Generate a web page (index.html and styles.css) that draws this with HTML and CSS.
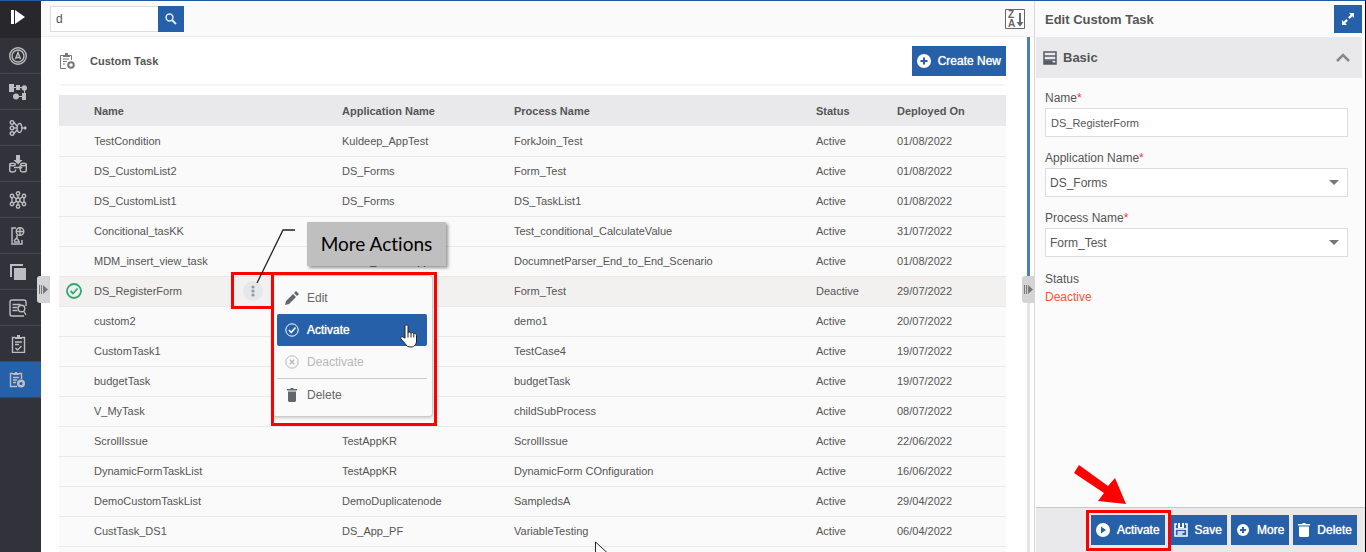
FILE: index.html
```html
<!DOCTYPE html>
<html lang="en">
<head>
    <meta charset="UTF-8">
    <meta name="viewport" content="width=device-width, initial-scale=1.0">
    <title>Custom Task</title>
    <link rel="stylesheet" href="styles.css">
</head>
<body>
    <div class="app">
        <nav class="sidebar" aria-label="Modules">
            <a href="#" class="nav-item logo" aria-label="Home">
                <svg width="16" height="16" viewBox="0 0 16 16" fill="#fff"><path d="M1 1h3v14H1zM5 1l10 7-10 7z"/></svg>
            </a>
            <a href="#" class="nav-item" aria-label="Applications">
                <svg width="18" height="18" viewBox="0 0 18 18" class="line"><circle cx="9" cy="9" r="8.300"/><circle cx="9" cy="9" r="6"/><path d="M6.500 12 9 5.500l2.500 6.500M7.500 10.500h3"/></svg>
            </a>
            <a href="#" class="nav-item" aria-label="Processes">
                <svg width="18" height="18" viewBox="0 0 18 18" class="solid"><path d="M0 1h5v8H0zM7 2h4v5H7z"/><circle cx="15.300" cy="5" r="2.700"/><circle cx="7" cy="13.500" r="3"/><path d="M13 10h4v7h-4zM5 4h9v1H5zM15 7h1v4h-1zM9 13h5v1H9z"/></svg>
            </a>
            <a href="#" class="nav-item" aria-label="Integrations">
                <svg width="18" height="18" viewBox="0 0 18 18" class="line"><circle cx="3" cy="3.500" r="1.800"/><circle cx="3" cy="9" r="1.800"/><circle cx="3" cy="14.500" r="1.800"/><path d="M5 3.500 8 7M5 9h3M5 14.500 8 11M13 9h4M15.500 7.500 17 9l-1.500 1.500"/><ellipse cx="10.500" cy="9" rx="2.300" ry="4.500"/></svg>
            </a>
            <a href="#" class="nav-item" aria-label="Deploy">
                <svg width="18" height="18" viewBox="0 0 18 18" class="line"><path class="solid" d="M7 0h4v5h2.500L9 9.500 4.500 5H7z"/><ellipse cx="3.500" cy="9.500" rx="2.800" ry="1.200"/><path d="M.7 9.500v6c0 2 5.800 2 5.800 0v-1M17.300 9.500v6c0 2-5.800 2-5.800 0v-1"/><ellipse cx="14.500" cy="9.500" rx="2.800" ry="1.200"/><path d="M5 12.500h7M10.500 10.500l2 2-2 2"/></svg>
            </a>
            <a href="#" class="nav-item" aria-label="Network">
                <svg width="18" height="18" viewBox="0 0 18 18" class="line"><circle cx="9" cy="9" r="2"/><circle cx="9" cy="2.500" r="1.700"/><circle cx="9" cy="15.500" r="1.700"/><circle cx="3" cy="5" r="1.700"/><circle cx="15" cy="5" r="1.700"/><circle cx="3" cy="13" r="1.700"/><circle cx="15" cy="13" r="1.700"/><path d="M9 4v3M9 11v3M5 6l2.500 2M13 6l-2.500 2M5 12l2.500-2M13 12l-2.500-2M3 7v4M15 7v4"/></svg>
            </a>
            <a href="#" class="nav-item" aria-label="Mobile">
                <svg width="18" height="20" viewBox="0 0 18 20" class="line"><path d="M7 2H3v16h10v-4"/><circle cx="11" cy="5.500" r="3.800"/><path d="M7 5.500h8M11 2v7M8 9v3M5 15l2.500-3 2.500 3M5 16h6"/></svg>
            </a>
            <a href="#" class="nav-item" aria-label="Copies">
                <svg width="18" height="18" viewBox="0 0 18 18" class="solid"><path d="M1 1h13v2H3v11H1zM5 5h12v12H5z"/></svg>
            </a>
            <a href="#" class="nav-item" aria-label="Logs">
                <svg width="18" height="18" viewBox="0 0 18 18" class="line"><path d="M17 7V3a2 2 0 0 0-2-2H3a2 2 0 0 0-2 2v12a2 2 0 0 0 2 2h12"/><path d="M3.500 5.500h8M3.500 8.500h5M3.500 11.500h5"/><circle cx="12.500" cy="9.500" r="3.300"/><path d="m14.500 12 2.500 4"/></svg>
            </a>
            <a href="#" class="nav-item" aria-label="Tasks">
                <svg width="18" height="18" viewBox="0 0 18 18" class="line"><path d="M6 2.500H3.500v15h12v-15H13"/><path class="solid" d="M6 2h2V0h3v2h2v2H6z"/><path d="M6 7h7M6 9.500h4M6.500 13l2 2 4-4"/></svg>
            </a>
            <a href="#" class="nav-item active" aria-label="Custom Task">
                <svg width="18" height="18" viewBox="0 0 18 18" class="line"><path d="M4 2.500H1.500v13H8M10 2.500h2.500V8"/><path class="solid" d="M4 2h2V1h2v1h2v2H4z"/><path d="M4 6.500h6M4 9h4M4 11.500h3"/><circle cx="12" cy="12.500" r="2.800" stroke-width="2.500"/></svg>
            </a>
        </nav>
        <button type="button" class="handle handle-left" aria-label="Toggle menu">
            <svg width="9" height="9" viewBox="0 0 9 9" fill="#777"><path d="M0 0h1v9H0zM2 0h1v9H2zM4 0l5 4.500L4 9z"/></svg>
        </button>

        <main class="main">
            <div class="toolbar">
                <form class="search">
                    <input type="text" value="d" aria-label="Search">
                    <button type="button" aria-label="Search">
                        <svg width="12" height="12" viewBox="0 0 12 12" fill="none" stroke="#dfe9f5"><circle cx="4.500" cy="4.500" r="3.400" stroke-width="1.500"/><path d="m7 7 4 4" stroke-width="2"/></svg>
                    </button>
                </form>
                <button type="button" class="sort" aria-label="Sort descending">
                    <svg width="20" height="20" viewBox="0 0 20 20" fill="#666"><path d="M.5.500h19v19H.5z" fill="none" stroke="#666"/><text x="3" y="9">Z</text><text x="3" y="18">A</text><path d="M14 4h2v9h2.500L15 17.500 11.500 13H14z"/></svg>
                </button>
            </div>
            <div class="content">
                <div class="title-bar">
                    <svg class="title-icon" width="17" height="18" viewBox="0 0 17 18" fill="none" stroke="#777"><path d="M4 3.500H1.500v13H7M10 3.500h2.500V8"/><path d="M4 3h2V1h3v2h2v2H4z" fill="#777" stroke="none"/><path d="M4 7h6M4 9.500h4M4 12h2"/><circle cx="12" cy="13" r="2.800" stroke-width="2"/></svg>
                    <h1>Custom Task</h1>
                    <button type="button" class="btn create">
                        <svg width="14" height="14" viewBox="0 0 14 14"><circle cx="7" cy="7" r="7" fill="#fff"/><path d="M7 3.500v7M3.500 7h7" stroke="#2560a8" stroke-width="2"/></svg>
                        Create New
                    </button>
                </div>
                <table class="tasks">
                    <thead>
                        <tr>
                            <th class="col-check"></th>
                            <th class="col-name">Name</th>
                            <th class="col-more"></th>
                            <th class="col-app">Application Name</th>
                            <th>Process Name</th>
                            <th class="col-status">Status</th>
                            <th class="col-date">Deployed On</th>
                        </tr>
                    </thead>
                    <tbody>
                        <tr><td></td><td>TestCondition</td><td></td><td>Kuldeep_AppTest</td><td>ForkJoin_Test</td><td>Active</td><td>01/08/2022</td></tr>
                        <tr><td></td><td>DS_CustomList2</td><td></td><td>DS_Forms</td><td>Form_Test</td><td>Active</td><td>01/08/2022</td></tr>
                        <tr><td></td><td>DS_CustomList1</td><td></td><td>DS_Forms</td><td>DS_TaskList1</td><td>Active</td><td>01/08/2022</td></tr>
                        <tr><td></td><td>Concitional_tasKK</td><td></td><td></td><td>Test_conditional_CalculateValue</td><td>Active</td><td>31/07/2022</td></tr>
                        <tr><td></td><td>MDM_insert_view_task</td><td></td><td>Kunal_MasterApp</td><td>DocumnetParser_End_to_End_Scenario</td><td>Active</td><td>01/08/2022</td></tr>
                        <tr class="selected">
                            <td class="check">
                                <svg width="16" height="16" viewBox="0 0 16 16" fill="none" stroke="#2fa970" stroke-width="1.800"><circle cx="8" cy="8" r="7"/><path d="m4.500 8 2.500 2.500 4.500-5"/></svg>
                            </td>
                            <td>DS_RegisterForm</td>
                            <td>
                                <button type="button" class="more" aria-label="More Actions">
                                    <svg width="4" height="12" viewBox="0 0 4 12" fill="#999"><circle cx="2" cy="2" r="1.600"/><circle cx="2" cy="6" r="1.600"/><circle cx="2" cy="10" r="1.600"/></svg>
                                </button>
                            </td>
                            <td></td><td>Form_Test</td><td>Deactive</td><td>29/07/2022</td>
                        </tr>
                        <tr><td></td><td>custom2</td><td></td><td></td><td>demo1</td><td>Active</td><td>20/07/2022</td></tr>
                        <tr><td></td><td>CustomTask1</td><td></td><td></td><td>TestCase4</td><td>Active</td><td>19/07/2022</td></tr>
                        <tr><td></td><td>budgetTask</td><td></td><td></td><td>budgetTask</td><td>Active</td><td>19/07/2022</td></tr>
                        <tr><td></td><td>V_MyTask</td><td></td><td></td><td>childSubProcess</td><td>Active</td><td>08/07/2022</td></tr>
                        <tr><td></td><td>ScrollIssue</td><td></td><td>TestAppKR</td><td>ScrollIssue</td><td>Active</td><td>22/06/2022</td></tr>
                        <tr><td></td><td>DynamicFormTaskList</td><td></td><td>TestAppKR</td><td>DynamicForm COnfiguration</td><td>Active</td><td>16/06/2022</td></tr>
                        <tr><td></td><td>DemoCustomTaskList</td><td></td><td>DemoDuplicatenode</td><td>SampledsA</td><td>Active</td><td>29/04/2022</td></tr>
                        <tr><td></td><td>CustTask_DS1</td><td></td><td>DS_App_PF</td><td>VariableTesting</td><td>Active</td><td>06/04/2022</td></tr>
                        <tr><td></td><td></td><td></td><td></td><td></td><td></td><td></td></tr>
                    </tbody>
                </table>
            </div>
            <div class="scrollbar"></div>
        </main>

        <aside class="panel">
            <button type="button" class="handle handle-panel" aria-label="Toggle panel">
                <svg width="9" height="9" viewBox="0 0 9 9" fill="#777"><path d="M0 0h1v9H0zM2 0h1v9H2zM4 0l5 4.500L4 9z"/></svg>
            </button>
            <header class="panel-header">
                <h2>Edit Custom Task</h2>
                <button type="button" class="expand" aria-label="Expand">
                    <svg width="14" height="14" viewBox="0 0 14 14" fill="#fff"><path d="M8 1h5v5l-1.700-1.700-2.600 2.600-1.600-1.600 2.600-2.600zM1 8v5h5l-1.700-1.700 2.600-2.600-1.600-1.600-2.600 2.600z"/></svg>
                </button>
            </header>
            <div class="section-header">
                <svg width="14" height="14" viewBox="0 0 14 14" fill="none" stroke="#555b66" stroke-width="1.500"><path d="M1 1h12v12H1zM1 5h12M1 9h12"/><path d="M1 9.500h8l1 2h3V13H1z" fill="#555b66" stroke="none"/></svg>
                <h3>Basic</h3>
                <svg class="chevron" width="14" height="9" viewBox="0 0 14 9" fill="none" stroke="#888" stroke-width="2.500"><path d="m1 8 6-6 6 6"/></svg>
            </div>
            <form class="form">
                <div class="field">
                    <label for="name">Name<span class="required">*</span></label>
                    <input type="text" id="name" value="DS_RegisterForm">
                </div>
                <div class="field">
                    <label for="application">Application Name<span class="required">*</span></label>
                    <div class="select-box"><select id="application"><option>DS_Forms</option></select></div>
                </div>
                <div class="field">
                    <label for="process">Process Name<span class="required">*</span></label>
                    <div class="select-box"><select id="process"><option>Form_Test</option></select></div>
                </div>
                <div class="status">
                    <div>Status</div>
                    <div class="status-value">Deactive</div>
                </div>
            </form>
            <footer class="panel-footer">
                <button type="button" class="btn">
                    <svg width="14" height="14" viewBox="0 0 14 14"><circle cx="7" cy="7" r="7" fill="#fff"/><path d="m5 3.500 5 3.500-5 3.500z" fill="#2560a8"/></svg>
                    Activate
                </button>
                <button type="button" class="btn">
                    <svg width="14" height="14" viewBox="0 0 14 14" fill="none" stroke="#fff" stroke-width="1.500"><path d="M3 1H1v12h12V1h-2M1 6h12M3.500 9h7M3.500 11h5"/><path d="M4 0h2v4h2V0h2v5H4z" fill="#fff" stroke="none"/></svg>
                    Save
                </button>
                <button type="button" class="btn">
                    <svg width="14" height="14" viewBox="0 0 14 14"><circle cx="7" cy="7" r="6" fill="#fff"/><path d="M7 4v6M4 7h6" stroke="#2560a8" stroke-width="2"/></svg>
                    More
                </button>
                <button type="button" class="btn">
                    <svg width="12" height="14" viewBox="0 0 12 14" fill="#fff"><path d="M0 1h4l1-1h2l1 1h4v1.500H0zM1 3.500h10V13l-1 1H2l-1-1z"/></svg>
                    Delete
                </button>
            </footer>
            <div class="mark mark-activate"></div>
            <svg class="arrow" width="54" height="42" viewBox="0 0 54 42" fill="#f00"><path d="M7 1 36 22l7-8 11 26-28-3 6-8L2 9z"/></svg>
        </aside>

        <div class="menu">
            <button type="button" class="menu-item">
                <svg width="14" height="14" viewBox="0 0 14 14" fill="#62676e"><path d="m0 14 1-4 7-7 3 3-7 7zM9 2l2-2 3 3-2 2z"/></svg>
                Edit
            </button>
            <button type="button" class="menu-item current">
                <svg width="14" height="14" viewBox="0 0 14 14" fill="none" stroke="#fff"><circle cx="7" cy="7" r="6.200"/><path d="m4 7 2.200 2.500L10.500 4.500" stroke-width="1.500"/></svg>
                Activate
            </button>
            <button type="button" class="menu-item" disabled>
                <svg width="14" height="14" viewBox="0 0 14 14" fill="none" stroke="#b8b8b8"><circle cx="7" cy="7" r="6.200"/><path d="m4.800 4.800 4.400 4.400M9.200 4.800 4.800 9.200" stroke-width="1.300"/></svg>
                Deactivate
            </button>
            <button type="button" class="menu-item last">
                <svg width="14" height="14" viewBox="0 0 14 14" fill="#62676e"><path d="M2 1h3l1-1h2l1 1h3v1.500H2zM3 3.500h8V13l-1 1H4l-1-1z"/></svg>
                Delete
            </button>
        </div>
        <div class="mark mark-more"></div>
        <div class="mark mark-menu"></div>
        <svg class="leader" width="40" height="56" viewBox="0 0 40 56" fill="none" stroke="#222" stroke-width="1.300"><path d="M39 1H27L1 54"/></svg>
        <div class="callout">More Actions</div>
        <svg class="cursor-hand" width="18" height="24" viewBox="0 0 18 24" fill="#fff" stroke="#222" stroke-linejoin="round"><path d="M5 14V2.500c0-2 3-2 3 0V9c0-1.500 3-1.300 3 .5 0-1.500 2.800-1.200 2.800.8 0-1.300 2.700-1 2.700 1V17c0 3-2 6-5.500 6-3 0-4.500-1-6-3.500L1 15c-1-2 1-3 2.500-1.500z"/><path d="M8 9v4.500M11 9.500v4M13.800 10.500v3"/></svg>
        <svg class="cursor-arrow" width="14" height="20" viewBox="0 0 14 20" fill="#fff" stroke="#222"><path d="M.5 1v16l4-4 3 6 2.500-1-3-6h5.500z"/></svg>
    </div>
</body>
</html>
```

FILE: styles.css
```css
* {
    box-sizing: border-box;
}

body {
    margin: 0;
    font-family: "Liberation Sans", Arial, sans-serif;
    font-size: 12px;
    color: #555;
    background-color: #fff;
}

h1, h2, h3 {
    margin: 0;
}

input, select, button {
    font-family: inherit;
    font-size: 12px;
    color: inherit;
}

button {
    padding: 0;
    border: none;
    background: none;
    cursor: pointer;
}

svg {
    display: block;
    flex: none;
}

.app {
    position: relative;
    display: flex;
    height: 100vh;
    overflow: hidden;
    border-top: 1px solid #1f5ba6;
    border-right: 1px solid #000;
}

/* Sidebar */
.sidebar {
    flex: none;
    width: 41px;
    background-color: #32323a;
}

.nav-item {
    display: flex;
    align-items: center;
    height: 36px;
    padding-left: 9px;
    border-bottom: 1px solid #45454d;
}

.nav-item.logo {
    height: 37px;
    padding: 0 0 6px 10px;
    border: none;
    background-color: #28272e;
}

.nav-item.active {
    background-color: #2560a8;
}

.line {
    fill: none;
    stroke: #bdbdc1;
    stroke-width: 1.4;
}

.solid {
    fill: #bdbdc1;
    stroke: none;
}

.handle {
    position: absolute;
    top: 275px;
    z-index: 1;
    display: flex;
    align-items: center;
    justify-content: center;
    width: 13px;
    height: 27px;
    border-radius: 3px 0 0 3px;
    background-color: #d4d4d4;
}

.handle-left {
    left: 37px;
}

.handle-panel {
    left: -13px;
}

/* Main list */
.main {
    position: relative;
    flex: 1;
    min-width: 0;
}

.toolbar {
    display: flex;
    align-items: center;
    justify-content: space-between;
    height: 36px;
    padding: 0 9px;
    border-bottom: 1px solid #eee;
    background-color: #fafafa;
}

.search {
    display: flex;
}

.search input {
    width: 108px;
    height: 26px;
    padding: 0 5px;
    border: 1px solid #ddd;
    border-right: none;
    background-color: #fff;
}

.search button {
    display: flex;
    align-items: center;
    justify-content: center;
    width: 26px;
    height: 26px;
    background-color: #2560a8;
}

.sort {
    font-size: 10px;
    font-weight: bold;
    background-color: #fff;
}

.content {
    padding: 0 28px 0 18px;
}

.title-bar {
    display: flex;
    align-items: center;
    height: 49px;
    margin-bottom: 9px;
    border-bottom: 2px solid #f5f5f5;
    border-radius: 4px;
}

.title-icon {
    margin-right: 14px;
}

.title-bar h1 {
    font-size: 11px;
}

.btn {
    display: flex;
    align-items: center;
    gap: 7px;
    height: 30px;
    padding: 0 5px;
    color: #fff;
    text-shadow: 0 0 1px #fff;
    background-color: #2560a8;
}

.create {
    margin-left: auto;
}

.tasks {
    width: 100%;
    table-layout: fixed;
    border-collapse: collapse;
    font-size: 11px;
}

.tasks th {
    height: 31px;
    padding: 0;
    text-align: left;
    background-color: #e9e9eb;
}

.tasks td {
    height: 30px;
    padding: 0;
    border-bottom: 1px solid #e9e9e9;
    background-color: #fafafa;
    white-space: nowrap;
}

.tasks .selected td {
    background-color: #f3f1ef;
}

.tasks .check {
    padding-left: 7px;
}

.col-check {
    width: 35px;
}

.col-name {
    width: 149px;
}

.col-more {
    width: 99px;
}

.col-app {
    width: 172px;
}

.col-status {
    width: 81px;
}

.col-date {
    width: 109px;
}

.more {
    display: flex;
    align-items: center;
    justify-content: center;
    width: 20px;
    height: 20px;
    border-radius: 50%;
    background-color: #e3e8eb;
}

.scrollbar {
    position: absolute;
    top: 36px;
    right: 4px;
    bottom: 0;
    width: 3px;
    background: linear-gradient(#4f7fba 246px, #e4e4e4 246px);
}

/* Edit panel */
.panel {
    position: relative;
    flex: none;
    display: flex;
    flex-direction: column;
    width: 331px;
    border-left: 1px solid #d8d8d8;
    background-color: #fbfbfb;
}

.panel-header {
    display: flex;
    align-items: center;
    justify-content: space-between;
    height: 36px;
    padding: 0 3px 0 10px;
}

.panel-header h2 {
    font-size: 13px;
}

.expand {
    display: flex;
    align-items: center;
    justify-content: center;
    width: 28px;
    height: 28px;
    background-color: #2560a8;
}

.section-header {
    display: flex;
    align-items: center;
    gap: 6px;
    height: 41px;
    margin: 0 3px 0 1px;
    padding: 0 12px 0 7px;
    background-color: #e9e9eb;
}

.section-header h3 {
    font-size: 13px;
}

.chevron {
    margin-left: auto;
}

.form {
    flex: 1;
    display: flex;
    flex-direction: column;
    gap: 13px;
    padding: 12px 17px 0 10px;
}

.field {
    display: flex;
    flex-direction: column;
    gap: 2px;
}

.field label {
    line-height: 16px;
}

.required {
    color: #f33;
}

.field input, .field select {
    width: 100%;
    height: 29px;
    padding: 0 5px;
    border: 1px solid #ddd;
    border-radius: 0;
    background-color: #fff;
}

.field input {
    font-size: 11px;
}

.field select {
    display: block;
    padding: 0 4px;
    appearance: none;
}

.select-box {
    position: relative;
}

.select-box::after {
    content: "";
    position: absolute;
    top: 12px;
    right: 9px;
    border: 5px solid transparent;
    border-top-color: #777;
    border-bottom: none;
    pointer-events: none;
}

.status {
    line-height: 18px;
}

.status-value {
    color: #ff5533;
}

.panel-footer {
    display: flex;
    justify-content: flex-end;
    gap: 4px;
    height: 45px;
    margin-left: 1px;
    padding: 7px 8px 0 0;
    border-top: 1px solid #c8c8c8;
    background-color: #e9e9eb;
}

/* Row menu */
.menu {
    position: absolute;
    top: 274px;
    left: 272px;
    width: 161px;
    padding: 6px 5px 6px 4px;
    border: 1px solid #ccc;
    border-radius: 4px;
    background-color: #fafafa;
    box-shadow: 0 1px 3px rgba(0, 0, 0, 0.2);
}

.menu-item {
    display: flex;
    align-items: center;
    gap: 8px;
    width: 100%;
    height: 32px;
    padding: 0 8px;
    border-radius: 2px;
    color: #666;
}

.menu-item.current {
    color: #fff;
    text-shadow: 0 0 1px #fff;
    background-color: #2560a8;
}

.menu-item:disabled {
    color: #b8b8b8;
}

.menu-item.last {
    border-top: 1px solid #ccc;
    border-radius: 0;
}

/* Annotations */
.mark {
    position: absolute;
    border: 3px solid #f00;
}

.mark-more {
    top: 271px;
    left: 231px;
    width: 43px;
    height: 37px;
}

.mark-menu {
    top: 271px;
    left: 271px;
    width: 166px;
    height: 154px;
}

.mark-activate {
    right: 194px;
    bottom: 1px;
    width: 85px;
    height: 41px;
}

.arrow {
    position: absolute;
    right: 239px;
    bottom: 46px;
}

.leader {
    position: absolute;
    top: 228px;
    left: 256px;
}

.callout {
    position: absolute;
    top: 221px;
    left: 307px;
    width: 139px;
    font-family: Lato, "Open Sans", sans-serif;
    font-size: 19px;
    font-variant-ligatures: none;
    line-height: 44px;
    text-align: center;
    color: #000;
    background-color: #bfbfbf;
    box-shadow: 2px 2px 3px rgba(0, 0, 0, 0.4);
}

.cursor-hand {
    position: absolute;
    top: 323px;
    left: 400px;
}

.cursor-arrow {
    position: absolute;
    top: 540px;
    left: 595px;
}
```
